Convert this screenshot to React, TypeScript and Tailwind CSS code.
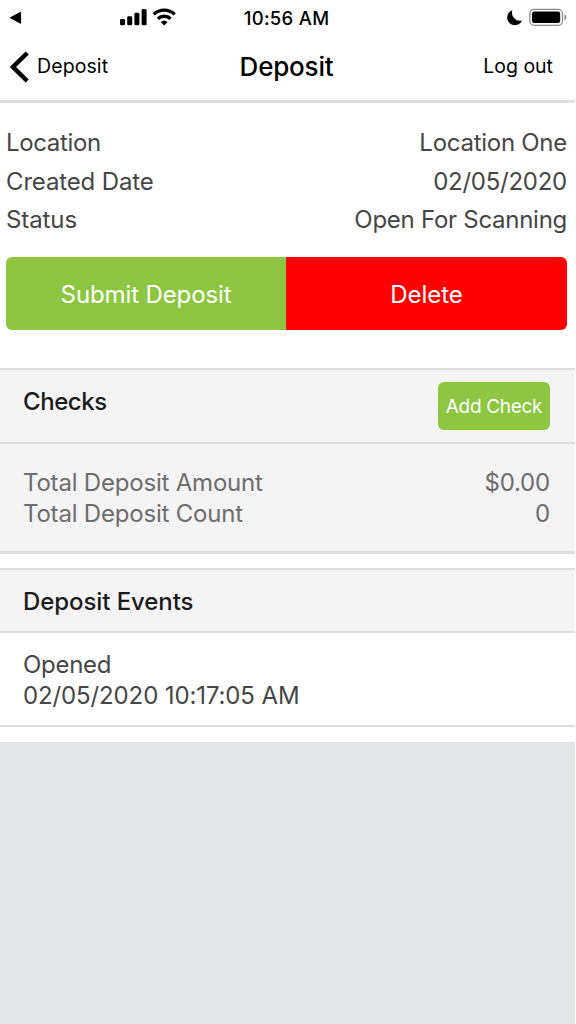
import React from 'react';

const details = [
  { label: 'Location', value: 'Location One', labelClass: 'tracking-[-0.35px]', valueClass: 'tracking-[-0.27px]' },
  { label: 'Created Date', value: '02/05/2020', labelClass: 'tracking-[-0.15px]', valueClass: 'tracking-[-0.25px]' },
  { label: 'Status', value: 'Open For Scanning', labelClass: 'tracking-[-0.1px]', valueClass: 'tracking-[-0.27px]' },
];

const totals = [
  { label: 'Total Deposit Amount', value: '$0.00' },
  { label: 'Total Deposit Count', value: '0' },
];

function StatusBar() {
  return (
    <div className="relative h-9 w-[575px]">
      <svg className="absolute inset-0 h-9 w-[575px]" viewBox="0 0 575 36">
        <path d="M10.3 17.8 20.6 12.3v11z" stroke="#000" strokeWidth="1" strokeLinejoin="round" />
        <rect x="120" y="19" width="5" height="6.3" rx="1.4" />
        <rect x="127.2" y="16.2" width="5" height="9.1" rx="1.4" />
        <rect x="134.4" y="12.8" width="5" height="12.5" rx="1.4" />
        <rect x="141.6" y="9" width="5" height="16.3" rx="1.4" />
        <g fill="none" stroke="#000" strokeWidth="3.3">
          <path d="M153.7 14.4a15.2 15.2 0 0 1 21 0" />
          <path d="M157.8 18.8a9.3 9.3 0 0 1 12.8 0" />
        </g>
        <path d="M160.8 22.1a5 5 0 0 1 6.8 0L164.2 25.5z" />
        <path d="M512.4 10.2a7.7 7.7 0 1 0 9.6 10.2 8 8 0 0 1-9.6-10.2z" />
        <rect x="529.9" y="9.3" width="32.6" height="16" rx="4.4" fill="none" stroke="#8d8d8d" strokeWidth="1.3" />
        <rect x="532" y="11.6" width="28.2" height="11.4" rx="2.2" />
        <path d="M564.4 14.4c2.6 1 2.6 4.8 0 5.8z" fill="#8d8d8d" />
      </svg>
      <p className="text-center pt-1.5 pr-0.5 text-[18.5px] leading-6 font-medium tracking-[0.3px] text-black">10:56 AM</p>
    </div>
  );
}

function NavBar() {
  return (
    <header className="w-[575px] h-16 grid grid-cols-3 items-center pb-[3px] text-black">
      <button className="flex items-center pl-2.5">
        <svg className="w-[19px] h-[32px]" viewBox="0 0 19 32" fill="none">
          <path d="M17.2 2 3 16l14.2 14" stroke="#000" strokeWidth="4.4" />
        </svg>
        <span className="ml-2 pb-0.5 text-[19.5px] leading-6 tracking-[0.1px]">Deposit</span>
      </button>
      <h1 className="text-center pt-px pr-0.5 text-[26px] leading-8 font-medium tracking-[-0.2px]">Deposit</h1>
      <button className="justify-self-end pb-0.5 pr-[22px] text-[19.5px] leading-6">Log out</button>
    </header>
  );
}

export default function App() {
  return (
    <div className="w-[576px] h-[1024px] overflow-hidden bg-white font-['Inter',sans-serif]">
      <StatusBar />
      <NavBar />

      <main className="w-[575px] border-t-[3px] border-[#e0e0e4] text-[24px] text-[#464646]">
        <section className="h-[265px] pl-[6px] pr-[8px] pt-[21px]">
          {details.map(row => (
            <div key={row.label} className="flex justify-between leading-[38.5px]">
              <span className={row.labelClass}>{row.label}</span>
              <span className={row.valueClass}>{row.value}</span>
            </div>
          ))}
          <div className="mt-[17.5px] h-[72.5px] flex rounded-[6px] overflow-hidden text-white">
            <button className="w-[280px] pt-[3px] bg-[#8ec641] tracking-[-0.12px]">Submit Deposit</button>
            <button className="flex-1 pt-[3px] bg-[#ff0000]">Delete</button>
          </div>
        </section>

        <section className="bg-[#f4f4f4] border-t-2 border-b-[3px] border-[#dfdfdf]">
          <div className="h-[74px] flex items-start justify-between pl-[23px] pr-[25px] border-b-2 border-[#dfdfdf]">
            <h2 className="pt-4 leading-8 font-medium tracking-[-0.45px] text-[#1b1b1b]">Checks</h2>
            <button className="mt-3 pt-0.5 w-[112px] h-12 rounded-[6px] bg-[#8ec641] text-[19px] tracking-[-0.3px] text-white whitespace-nowrap">Add Check</button>
          </div>
          <div className="h-[107px] pt-[23px] pl-[23px] pr-[25px] tracking-[-0.2px] text-[#6d6d6e]">
            {totals.map(row => (
              <div key={row.label} className="flex justify-between leading-[31px]">
                <span>{row.label}</span>
                <span>{row.value}</span>
              </div>
            ))}
          </div>
        </section>

        <section className="mt-[14px] border-y-2 border-[#dfdfdf]">
          <div className="h-[63px] flex items-center pt-[3px] pl-[23px] bg-[#f4f4f4] border-b-2 border-[#dfdfdf]">
            <h2 className="font-medium tracking-[-0.08px] text-[#1b1b1b]">Deposit Events</h2>
          </div>
          <div className="h-[92px] pt-4 pl-[23px] leading-[31px]">
            <p className="tracking-[-0.3px]">Opened</p>
            <p className="tracking-[-0.12px]">02/05/2020 10:17:05 AM</p>
          </div>
        </section>

        <div className="mt-[15px] h-[282px] bg-[#e5e6e8] border-t border-[#dedfe0]" />
      </main>
    </div>
  );
}
